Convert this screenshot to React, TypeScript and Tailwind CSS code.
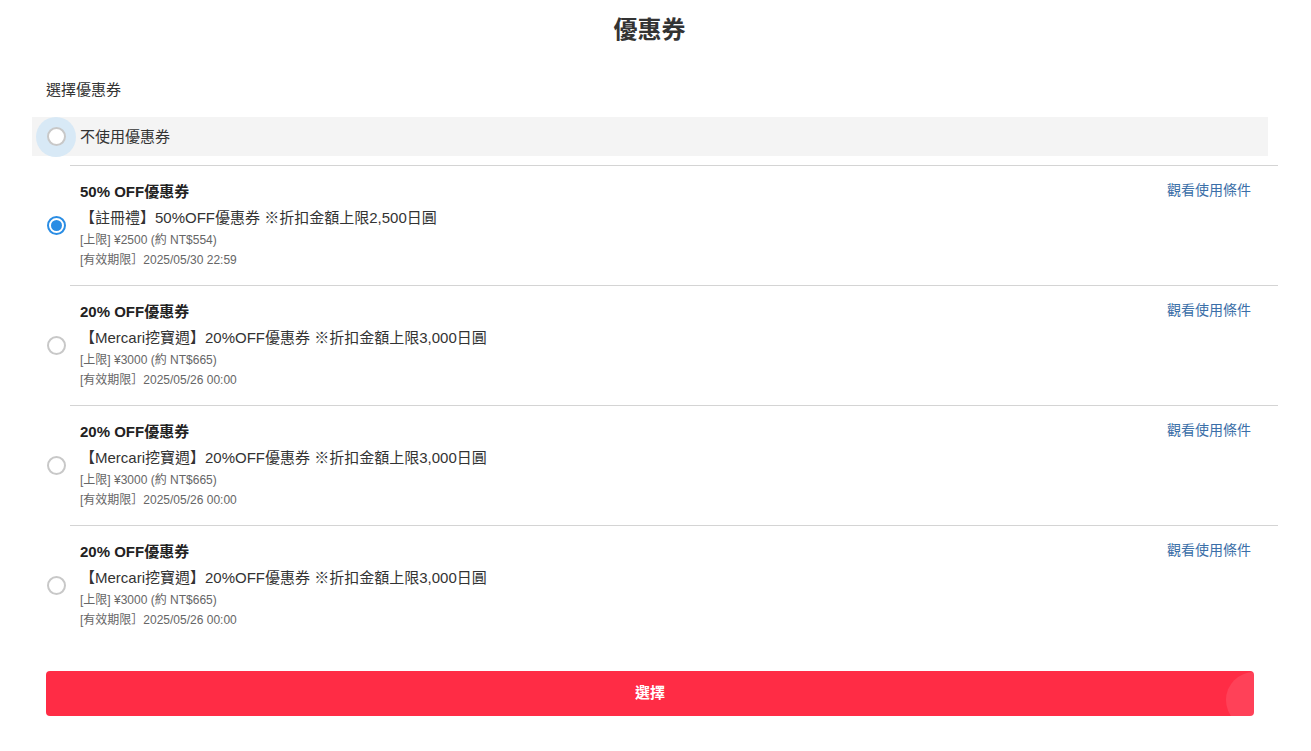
import React, { useState } from "react";

type Coupon = {
  id: string;
  title: string;
  desc: string;
  cap: string;
  expires: string;
};

const COUPONS: Coupon[] = [
  {
    id: "c1",
    title: "50% OFF優惠券",
    desc: "【註冊禮】50%OFF優惠券 ※折扣金額上限2,500日圓",
    cap: "[上限] ¥2500 (約 NT$554)",
    expires: "[有效期限］2025/05/30 22:59",
  },
  {
    id: "c2",
    title: "20% OFF優惠券",
    desc: "【Mercari挖寶週】20%OFF優惠券 ※折扣金額上限3,000日圓",
    cap: "[上限] ¥3000 (約 NT$665)",
    expires: "[有效期限］2025/05/26 00:00",
  },
  {
    id: "c3",
    title: "20% OFF優惠券",
    desc: "【Mercari挖寶週】20%OFF優惠券 ※折扣金額上限3,000日圓",
    cap: "[上限] ¥3000 (約 NT$665)",
    expires: "[有效期限］2025/05/26 00:00",
  },
  {
    id: "c4",
    title: "20% OFF優惠券",
    desc: "【Mercari挖寶週】20%OFF優惠券 ※折扣金額上限3,000日圓",
    cap: "[上限] ¥3000 (約 NT$665)",
    expires: "[有效期限］2025/05/26 00:00",
  },
];

function Radio({ checked }: { checked: boolean }) {
  return checked ? (
    <span className="flex h-[19px] w-[19px] items-center justify-center rounded-full border-2 border-[#2a8de4] bg-white">
      <span className="h-[11px] w-[11px] rounded-full bg-[#2a8de4]" />
    </span>
  ) : (
    <span className="block h-[19px] w-[19px] rounded-full border-[2.5px] border-[#c8c8c8] bg-white" />
  );
}

export default function App() {
  const [selected, setSelected] = useState<string>("c1");

  return (
    <div
      className="relative min-h-[751px] w-[1299px] bg-white text-[#333]"
      style={{ fontFamily: '"Liberation Sans", "Noto Sans CJK TC", sans-serif' }}
    >
      {/* 標題 */}
      <h1 className="pt-[15px] text-center text-[24px] font-bold leading-[30px] text-[#333]">
        優惠券
      </h1>

      <p className="ml-[46px] mt-[35px] text-[15px] leading-[20px]">選擇優惠券</p>

      {/* 不使用 */}
      <button
        type="button"
        onClick={() => setSelected("none")}
        className="ml-[32px] mt-[17px] flex h-[39px] w-[1236px] items-center bg-[#f4f4f4] text-left"
      >
        <span className="ml-[4px] flex h-[40px] w-[40px] items-center justify-center rounded-full bg-[#d8e9f6]">
          <Radio checked={selected === "none"} />
        </span>
        <span className="ml-[4px] text-[15px] leading-[20px]">不使用優惠券</span>
      </button>

      {/* 優惠券列表 */}
      <ul className="ml-[46px] w-[1232px] mt-[9px]">
        {COUPONS.map((c) => (
          <li
            key={c.id}
            className="flex cursor-pointer items-center"
            onClick={() => setSelected(c.id)}
          >
            <span className="flex w-[20px] shrink-0 items-center justify-center">
              <Radio checked={selected === c.id} />
            </span>
            <div className="ml-[4px] flex flex-1 border-t border-[#d4d4d4] pl-[10px] pr-[27px] pt-[16px] pb-[15px]">
              <div className="flex-1">
                <p className="text-[15px] font-bold leading-[20px] text-[#222]">{c.title}</p>
                <p className="mt-[4px] text-[15px] leading-[24px] text-[#333]">{c.desc}</p>
                <p className="text-[12px] leading-[20px] text-[#666]">{c.cap}</p>
                <p className="text-[12px] leading-[20px] text-[#666]">{c.expires}</p>
              </div>
              <a className="-mt-[2px] self-start text-[14px] leading-[20px] text-[#3b6fa8]">
                觀看使用條件
              </a>
            </div>
          </li>
        ))}
      </ul>

      <button
        type="button"
        className="ml-[46px] mt-[26px] flex h-[45px] w-[1208px] items-center justify-center rounded-[4px] bg-[#ff2c45] text-[15px] font-bold text-white"
      >
        選擇
      </button>

      {/* 角落吉祥物浮水印 */}
      <span className="pointer-events-none absolute left-[1226px] top-[672px] h-[56px] w-[56px] rounded-full bg-white/10" />
    </div>
  );
}
